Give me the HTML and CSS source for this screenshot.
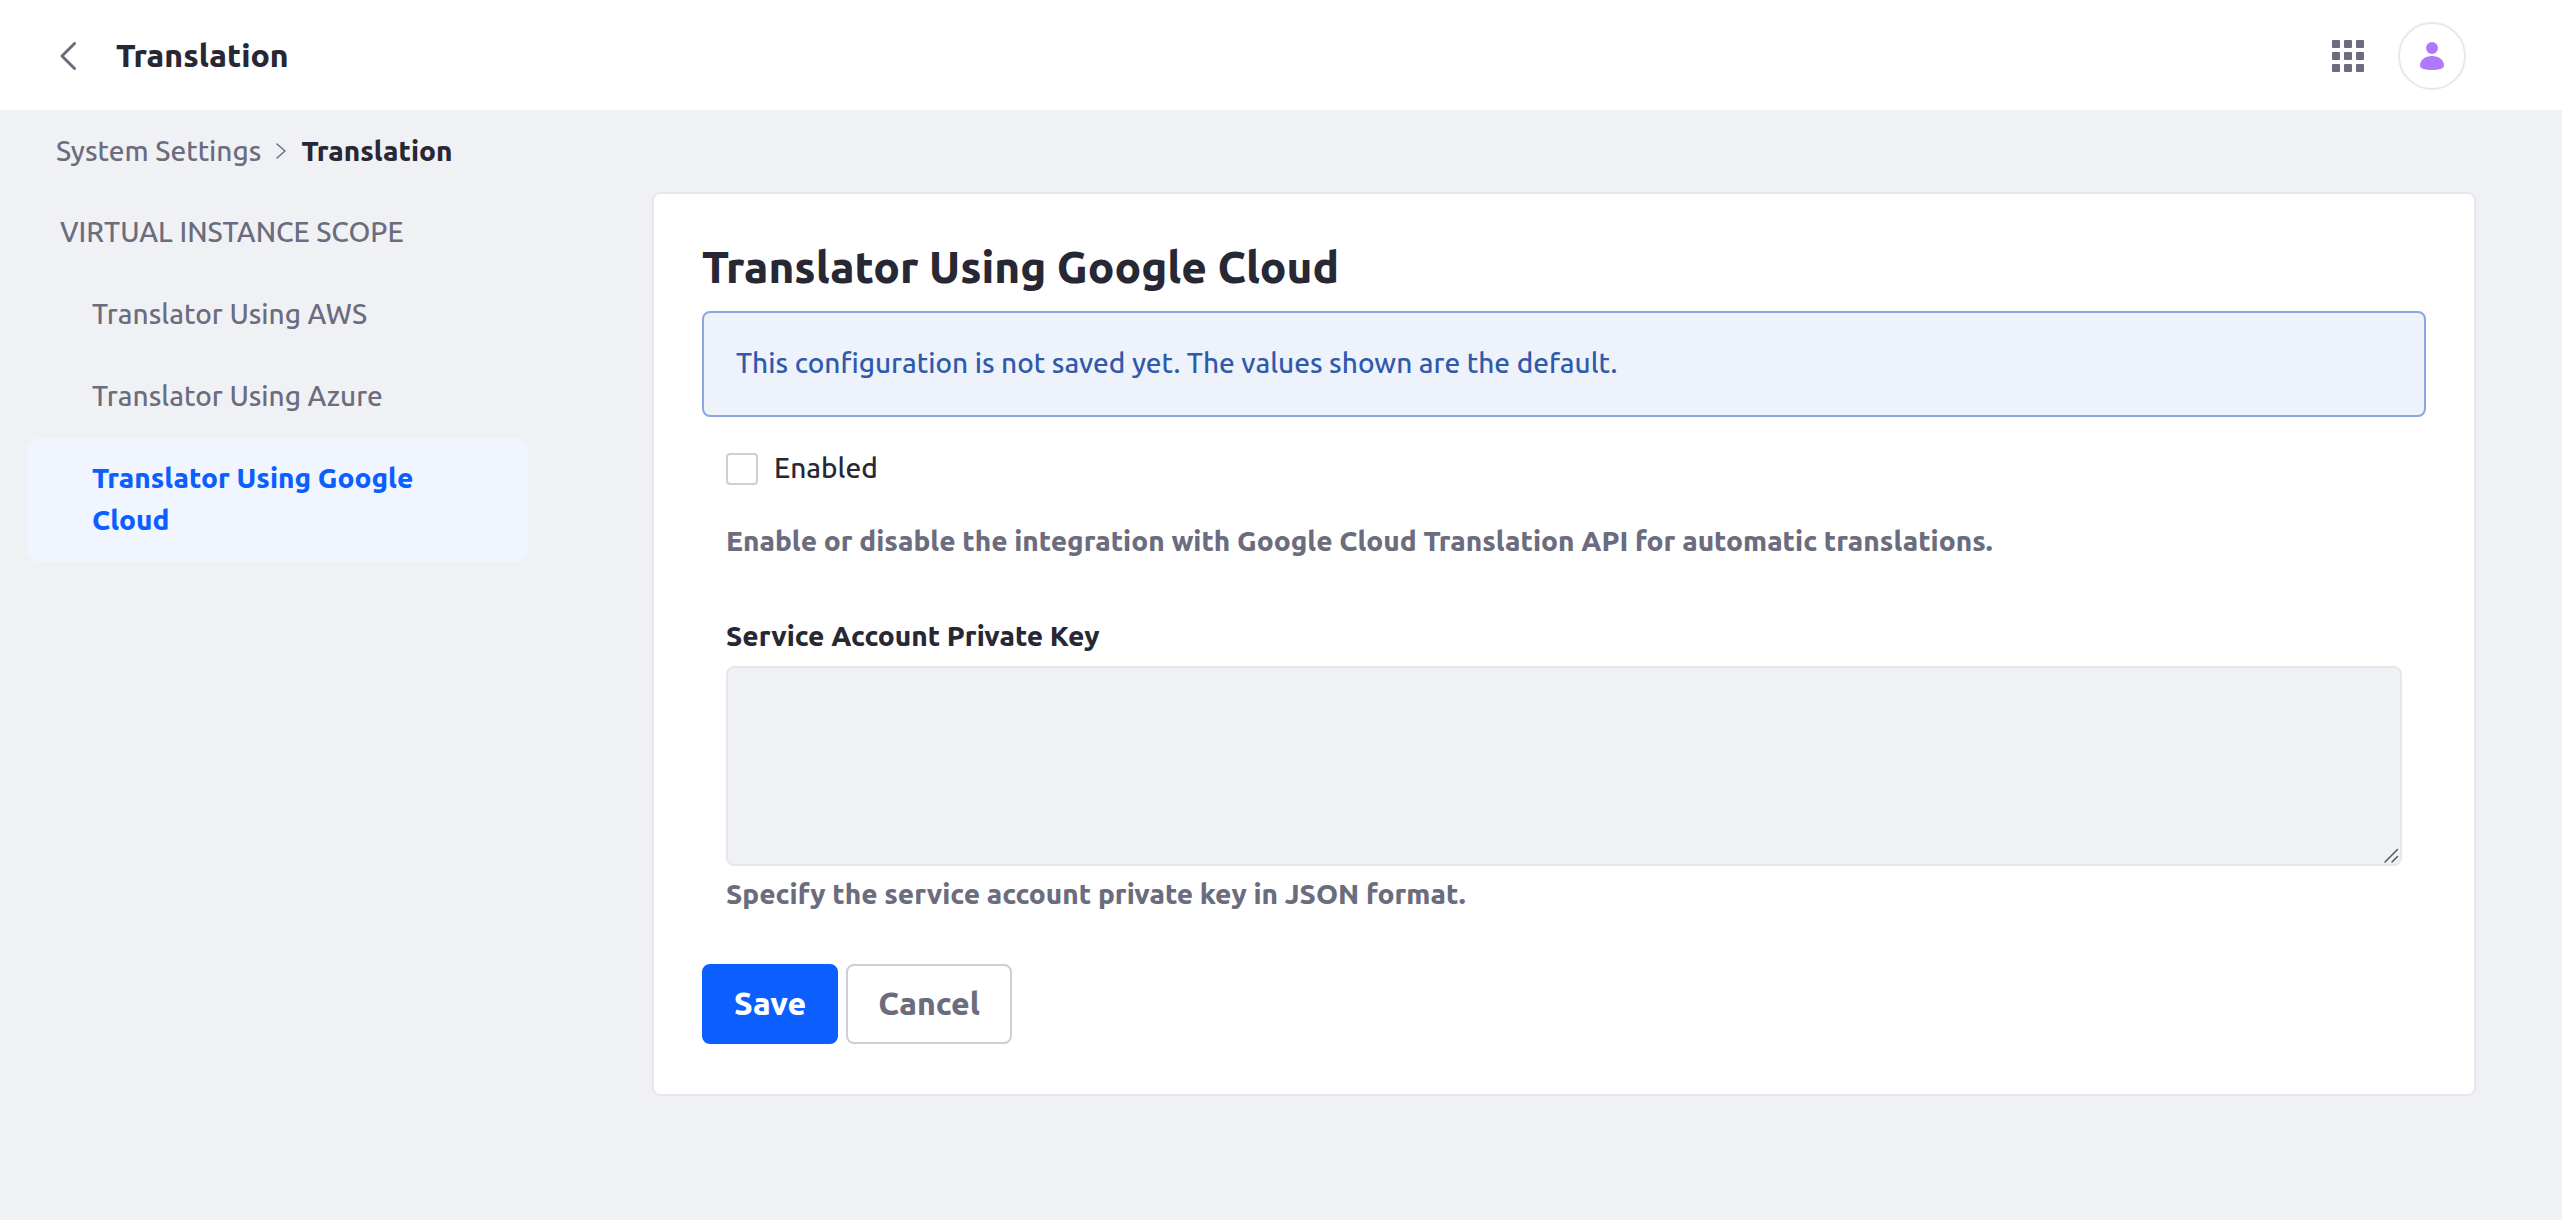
FILE: index.html
```html
<!DOCTYPE html>
<html lang="en">
<head>
<meta charset="utf-8">
<meta name="viewport" content="width=device-width, initial-scale=1">
<title>Translation</title>
<link rel="stylesheet" href="styles.css">
</head>
<body>
<header class="topbar">
  <a class="back" href="#" aria-label="Back">
    <svg width="16" height="28" viewBox="0 0 16 28" fill="none" stroke="currentColor" stroke-width="3" stroke-linecap="round" stroke-linejoin="round"><path d="M14.500 1.500 2 14l12.500 12.500"/></svg>
  </a>
  <h1 class="topbar-title">Translation</h1>
  <button class="apps" type="button" aria-label="Applications">
    <svg width="32" height="32" viewBox="0 0 32 32" fill="currentColor">
      <rect width="8" height="8" rx="1"/><rect x="12" width="8" height="8" rx="1"/><rect x="24" width="8" height="8" rx="1"/>
      <rect y="12" width="8" height="8" rx="1"/><rect x="12" y="12" width="8" height="8" rx="1"/><rect x="24" y="12" width="8" height="8" rx="1"/>
      <rect y="24" width="8" height="8" rx="1"/><rect x="12" y="24" width="8" height="8" rx="1"/><rect x="24" y="24" width="8" height="8" rx="1"/>
    </svg>
  </button>
  <button class="avatar" type="button" aria-label="User menu">
    <svg width="24" height="28" viewBox="0 0 24 28" fill="currentColor"><circle cx="12" cy="6" r="6"/><path d="M12 14C5 14 0 18 0 23.500C0 26.500 5 28 12 28S24 26.500 24 23.500C24 18 19 14 12 14Z"/></svg>
  </button>
</header>

<nav class="breadcrumb" aria-label="Breadcrumb">
  <a href="#">System Settings</a>
  <svg width="10" height="16" viewBox="0 0 10 16" fill="none" stroke="currentColor" stroke-width="1.500" stroke-linecap="round" stroke-linejoin="round"><path d="m1 1 8 7-8 7"/></svg>
  <span class="current">Translation</span>
</nav>

<div class="layout">
  <nav class="sidebar" aria-label="Configuration">
    <h2 class="scope">Virtual Instance Scope</h2>
    <ul class="menu">
      <li><a href="#">Translator Using AWS</a></li>
      <li><a href="#">Translator Using Azure</a></li>
      <li><a class="active" href="#" aria-current="page">Translator Using Google Cloud</a></li>
    </ul>
  </nav>

  <main class="card">
    <h2 class="card-title">Translator Using Google Cloud</h2>
    <div class="alert">This configuration is not saved yet. The values shown are the default.</div>
    <form>
      <div class="fields">
        <div class="check">
          <input id="enabled" type="checkbox">
          <label for="enabled">Enabled</label>
        </div>
        <p class="help">Enable or disable the integration with Google Cloud Translation API for automatic translations.</p>
        <label class="label" for="key">Service Account Private Key</label>
        <div class="key-wrap">
          <textarea class="key" id="key"></textarea>
          <svg class="grip" width="18" height="18" viewBox="0 0 18 18" fill="none" stroke="#55565c" stroke-width="1.500" stroke-linecap="round"><path d="M3 16 15.500 3.500M10 16l5.500-5.500"/></svg>
        </div>
        <p class="help">Specify the service account private key in JSON format.</p>
      </div>
      <div class="actions">
        <button class="btn primary" type="submit">Save</button>
        <button class="btn" type="button">Cancel</button>
      </div>
    </form>
  </main>
</div>
</body>
</html>
```
FILE: styles.css
```css
* { box-sizing: border-box; }

body {
  margin: 0;
  background: #f0f1f5;
  color: #272833;
  font-family: Ubuntu, "Noto Sans", sans-serif;
  font-size: 28px;
  font-weight: 500;
  line-height: 42px;
}

h1, h2, p, ul { margin: 0; padding: 0; }
a { color: inherit; text-decoration: none; }
svg { display: block; }
button, input, textarea { font: inherit; margin: 0; }

.topbar-title, .current, .menu .active, .card-title, .help, .label, .btn {
  font-weight: 800;
}

.topbar {
  display: flex;
  align-items: center;
  height: 110px;
  padding: 2px 96px 0 60px;
  background: #fff;
}
.back { color: #6b6c7e; }
.topbar-title { flex: 1; margin-left: 40px; padding-bottom: 2px; font-size: 32px; }
.apps, .avatar { padding: 0; border: 0; background: none; }
.apps { color: #6b6c7e; }
.avatar {
  display: grid;
  place-items: center;
  width: 68px;
  height: 68px;
  margin-left: 34px;
  border: 2px solid #e7e7ed;
  border-radius: 50%;
  color: #af78ff;
}

.breadcrumb {
  display: flex;
  align-items: center;
  gap: 15px;
  padding: 20px 56px;
  color: #6b6c7e;
}
.current { color: #272833; }

.layout {
  display: flex;
  align-items: flex-start;
  gap: 124px;
  padding: 0 86px 124px 28px;
}

.sidebar { flex: 0 0 500px; color: #6b6c7e; }
.scope {
  padding: 19px 32px 21px;
  font-size: inherit;
  font-weight: inherit;
  text-transform: uppercase;
}
.menu { list-style: none; }
.menu a { display: block; padding: 19px 64px 21px; border-radius: 12px; }
.menu .active { background: #f0f5ff; color: #0b5fff; }

.card {
  flex: 1;
  padding: 48px 48px 50px;
  border: 2px solid #e7e7ed;
  border-radius: 8px;
  background: #fff;
}
.card-title { margin-bottom: 20px; font-size: 44px; line-height: 49px; }
.alert {
  padding: 29px 32px 31px;
  border: 2px solid #89a7e0;
  border-radius: 8px;
  background: #eef2fa;
  color: #2e5aac;
}
.fields { padding: 31px 24px 0; }
.check { display: flex; align-items: center; gap: 16px; }
.check input {
  appearance: none;
  width: 32px;
  height: 32px;
  border: 2px solid #cdced9;
  border-radius: 4px;
  background: #fff;
}
.check label { padding-bottom: 2px; line-height: 40px; }
.help { margin-top: 7px; color: #6b6c7e; }
.check + .help { margin-top: 30px; }
.label { display: block; margin-top: 53px; }
.key-wrap { position: relative; margin-top: 9px; }
.key {
  display: block;
  width: 100%;
  height: 200px;
  padding: 16px;
  border: 2px solid #e7e7ed;
  border-radius: 8px;
  background: #f0f1f5;
  resize: vertical;
}
.key::-webkit-resizer { background: transparent; }
.grip { position: absolute; right: 2px; bottom: 2px; pointer-events: none; }
.actions { display: flex; gap: 8px; margin-top: 49px; }
.btn {
  height: 80px;
  padding: 0 30px 2px;
  border: 2px solid #cdced9;
  border-radius: 8px;
  background: #fff;
  color: #6b6c7e;
  font-size: 32px;
}
.primary { border-color: #0b5fff; background: #0b5fff; color: #fff; }
```
